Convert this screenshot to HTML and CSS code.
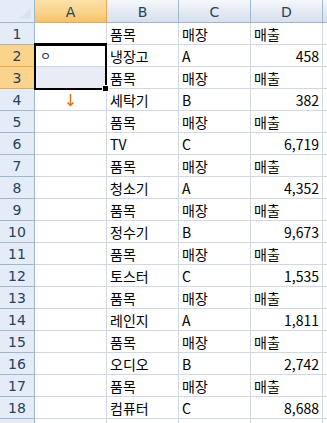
FILE: index.html
```html
<!DOCTYPE html>
<html lang="ko">
<head>
    <meta charset="UTF-8">
    <title>Sheet1</title>
    <link rel="stylesheet" href="styles.css">
</head>
<body>
  <div class="sheet">
    <div class="corner"><span class="tri"></span></div>
    <div class="col-head sel">A</div>
    <div class="col-head">B</div>
    <div class="col-head">C</div>
    <div class="col-head">D</div>
    <div class="col-head last"></div>

    <div class="row-head">1</div>
    <div class="cell"></div><div class="cell">품목</div><div class="cell">매장</div><div class="cell">매출</div><div class="cell"></div>

    <div class="row-head sel">2</div>
    <div class="cell active"><span class="circle">ㅇ</span><div class="range"><span class="handle"></span></div></div><div class="cell">냉장고</div><div class="cell">A</div><div class="cell num">458</div><div class="cell"></div>

    <div class="row-head sel">3</div>
    <div class="cell shade"></div><div class="cell">품목</div><div class="cell">매장</div><div class="cell">매출</div><div class="cell"></div>

    <div class="row-head">4</div>
    <div class="cell arrow">
      <svg width="9" height="14" viewBox="0 0 9 14"><path d="M4.5 1V12.5M1.5 9.5L4.5 12.5L7.5 9.5" fill="none" stroke="#e46c0a" stroke-width="1.4"/></svg>
    </div><div class="cell">세탁기</div><div class="cell">B</div><div class="cell num">382</div><div class="cell"></div>

    <div class="row-head">5</div>
    <div class="cell"></div><div class="cell">품목</div><div class="cell">매장</div><div class="cell">매출</div><div class="cell"></div>

    <div class="row-head">6</div>
    <div class="cell"></div><div class="cell">TV</div><div class="cell">C</div><div class="cell num">6,719</div><div class="cell"></div>

    <div class="row-head">7</div>
    <div class="cell"></div><div class="cell">품목</div><div class="cell">매장</div><div class="cell">매출</div><div class="cell"></div>

    <div class="row-head">8</div>
    <div class="cell"></div><div class="cell">청소기</div><div class="cell">A</div><div class="cell num">4,352</div><div class="cell"></div>

    <div class="row-head">9</div>
    <div class="cell"></div><div class="cell">품목</div><div class="cell">매장</div><div class="cell">매출</div><div class="cell"></div>

    <div class="row-head">10</div>
    <div class="cell"></div><div class="cell">정수기</div><div class="cell">B</div><div class="cell num">9,673</div><div class="cell"></div>

    <div class="row-head">11</div>
    <div class="cell"></div><div class="cell">품목</div><div class="cell">매장</div><div class="cell">매출</div><div class="cell"></div>

    <div class="row-head">12</div>
    <div class="cell"></div><div class="cell">토스터</div><div class="cell">C</div><div class="cell num">1,535</div><div class="cell"></div>

    <div class="row-head">13</div>
    <div class="cell"></div><div class="cell">품목</div><div class="cell">매장</div><div class="cell">매출</div><div class="cell"></div>

    <div class="row-head">14</div>
    <div class="cell"></div><div class="cell">레인지</div><div class="cell">A</div><div class="cell num">1,811</div><div class="cell"></div>

    <div class="row-head">15</div>
    <div class="cell"></div><div class="cell">품목</div><div class="cell">매장</div><div class="cell">매출</div><div class="cell"></div>

    <div class="row-head">16</div>
    <div class="cell"></div><div class="cell">오디오</div><div class="cell">B</div><div class="cell num">2,742</div><div class="cell"></div>

    <div class="row-head">17</div>
    <div class="cell"></div><div class="cell">품목</div><div class="cell">매장</div><div class="cell">매출</div><div class="cell"></div>

    <div class="row-head">18</div>
    <div class="cell"></div><div class="cell">컴퓨터</div><div class="cell">C</div><div class="cell num">8,688</div><div class="cell"></div>

    <div class="row-head"></div>
    <div class="cell"></div><div class="cell"></div><div class="cell"></div><div class="cell"></div><div class="cell"></div>
  </div>
</body>
</html>
```

FILE: styles.css
```css
body {
  margin: 0;
  background: #fff;
  overflow: hidden;
}

.sheet {
  display: grid;
  width: 327px;
  grid-template-columns: 35px 72px 72px 72px 72px minmax(0, 1fr);
  grid-template-rows: 23px repeat(19, 22px);
  font-family: "Noto Sans CJK KR", "Noto Sans", sans-serif;
  font-size: 14px;
  color: #000;
  overflow: hidden;
}

.corner {
  position: relative;
  background: #e4ecf7;
  border-right: 1px solid #9eb6ce;
  border-bottom: 1px solid #9eb6ce;
  box-sizing: border-box;
}

.corner .tri {
  position: absolute;
  right: 3px;
  bottom: 3px;
  width: 0;
  height: 0;
  border-left: 12px solid transparent;
  border-bottom: 12px solid #dbe3ee;
}

.col-head {
  box-sizing: border-box;
  border-right: 1px solid #9eb6ce;
  border-bottom: 1px solid #9eb6ce;
  background: linear-gradient(#f6f9fc, #e2e9f3 55%, #d8e1ee);
  color: #27415f;
  font-family: "DejaVu Sans", sans-serif;
  font-size: 14px;
  display: flex;
  align-items: center;
  justify-content: center;
  padding-top: 1px;
}

.col-head.sel {
  background: linear-gradient(#fbe0a8, #f9d48a 55%, #f4c26b);
  border-right-color: #f1a64a;
  border-bottom-color: #f1a64a;
}

.col-head.last {
  border-right: none;
}

.row-head {
  box-sizing: border-box;
  border-right: 1px solid #9eb6ce;
  border-bottom: 1px solid #9eb6ce;
  background: #e4ecf7;
  color: #27415f;
  font-family: "DejaVu Sans", sans-serif;
  font-size: 14px;
  display: flex;
  align-items: center;
  justify-content: center;
}

.row-head.sel {
  background: #fbd48c;
  border-bottom-color: #f1a64a;
}

.cell {
  box-sizing: border-box;
  border-right: 1px solid #d0d7e5;
  border-bottom: 1px solid #d0d7e5;
  padding: 0 3px;
  display: flex;
  align-items: flex-end;
  line-height: 20px;
  white-space: nowrap;
  overflow: hidden;
}

.cell.num {
  justify-content: flex-end;
}

.cell.shade {
  background: #e9ecf4;
}

.cell.active {
  position: relative;
  align-items: center;
  overflow: visible;
}

.circle {
  font-size: 12px;
  margin-left: 2px;
  color: #1d2a55;
}

.range {
  position: absolute;
  left: -1px;
  top: -2px;
  width: 73px;
  height: 47px;
  box-sizing: border-box;
  border: 2px solid #000;
  border-top-width: 3px;
  pointer-events: none;
}

.handle {
  position: absolute;
  right: -4px;
  bottom: -4px;
  width: 5px;
  height: 5px;
  background: #000;
  border: 1px solid #fff;
}

.cell.arrow {
  justify-content: center;
  align-items: center;
}
```
